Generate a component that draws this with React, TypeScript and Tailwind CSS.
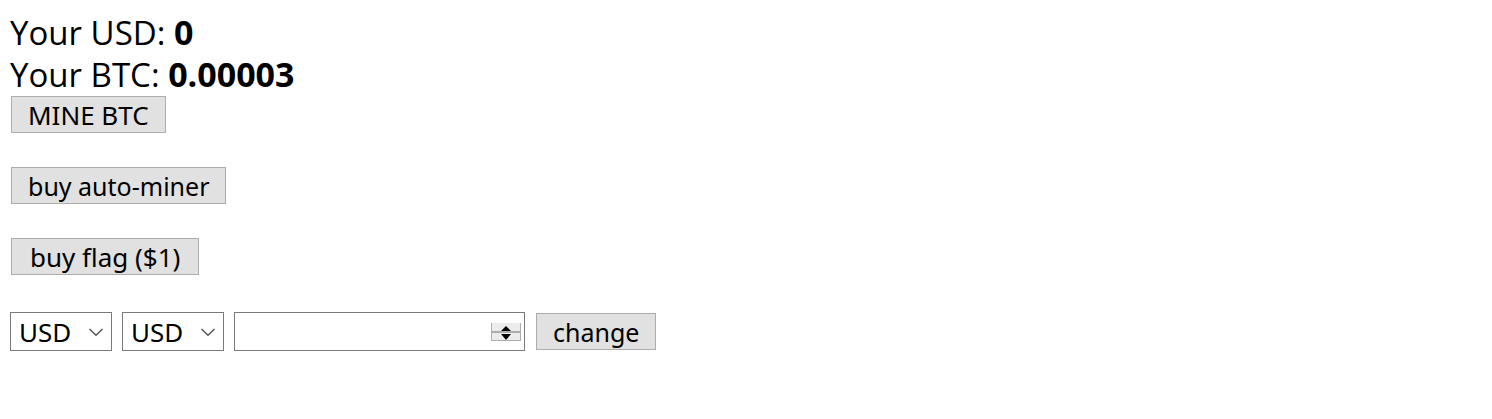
import { useState } from "react";
import type { ReactNode } from "react";

const control = "font-['Noto_Sans',sans-serif] leading-8 text-black";

function ActionButton({ className, children }: { className: string; children: ReactNode }) {
  return (
    <button
      type="button"
      className={`${control} ${className} h-[37px] whitespace-nowrap border border-[#adadad] bg-[#e1e1e1]`}
    >
      {children}
    </button>
  );
}

function CurrencySelect({ label }: { label: string }) {
  return (
    <div className="grid h-[39px] w-[102px] items-center border border-[#7a7a7a] bg-white">
      <select
        aria-label={label}
        defaultValue="USD"
        className={`${control} col-start-1 row-start-1 w-full appearance-none bg-transparent pl-2 text-[26px]`}
      >
        <option>USD</option>
        <option>BTC</option>
      </select>
      <svg
        viewBox="0 0 14 8"
        className="pointer-events-none col-start-1 row-start-1 mr-2 h-2 w-3.5 justify-self-end"
        fill="none"
        stroke="#444"
        strokeWidth="1.2"
        aria-hidden="true"
      >
        <path d="M0.5 1 7 7.300l6.500-6.300" />
      </svg>
    </div>
  );
}

function AmountInput() {
  const [amount, setAmount] = useState("");
  const step = (delta: number) => setAmount(String(Number(amount) + delta));
  return (
    <div className="flex h-[39px] w-[291px] items-center border border-[#7a7a7a] bg-white pr-[3px]">
      <input
        type="text"
        inputMode="decimal"
        aria-label="Amount"
        value={amount}
        onChange={(e) => setAmount(e.target.value)}
        className={`${control} min-w-0 flex-1 px-1 text-[26px] outline-none`}
      />
      <div className="flex w-[30px] flex-col">
        <button
          type="button"
          aria-label="Increase"
          onClick={() => step(1)}
          className="flex h-[9px] items-end justify-center border-x border-b border-[#adadad] bg-[#ececec]"
        >
          <svg viewBox="0 0 10 5" className="h-[5px] w-2.5" aria-hidden="true">
            <path d="M0 5 5 0l5 5z" />
          </svg>
        </button>
        <button
          type="button"
          aria-label="Decrease"
          onClick={() => step(-1)}
          className="flex h-[9px] items-end justify-center border border-[#adadad] bg-[#ececec]"
        >
          <svg viewBox="0 0 10 6" className="h-1.5 w-2.5" aria-hidden="true">
            <path d="M0 0h10L5 6z" />
          </svg>
        </button>
      </div>
    </div>
  );
}

export default function App() {
  return (
    <main className="bg-white px-2.5 pt-3 font-['Open_Sans',sans-serif] text-[33px] leading-[42px] text-black">
      <p>
        Your USD: <b className="text-[34px] leading-none">0</b>
      </p>
      <p>
        Your BTC: <b className="text-[34px] leading-none">0.00003</b>
      </p>
      <div className="flex flex-col items-start gap-[34px] pl-px">
        <ActionButton className="px-4 text-[26px]">MINE BTC</ActionButton>
        <ActionButton className="px-4 text-[25px]">buy auto-miner</ActionButton>
        <ActionButton className="px-[18px] text-[26px]">buy flag ($1)</ActionButton>
      </div>
      <form className="mt-[37px] flex flex-wrap items-center gap-2.5" onSubmit={(e) => e.preventDefault()}>
        <CurrencySelect label="From currency" />
        <CurrencySelect label="To currency" />
        <AmountInput />
        <div className="flex pl-px">
          <ActionButton className="px-4 text-[25px]">change</ActionButton>
        </div>
      </form>
    </main>
  );
}
